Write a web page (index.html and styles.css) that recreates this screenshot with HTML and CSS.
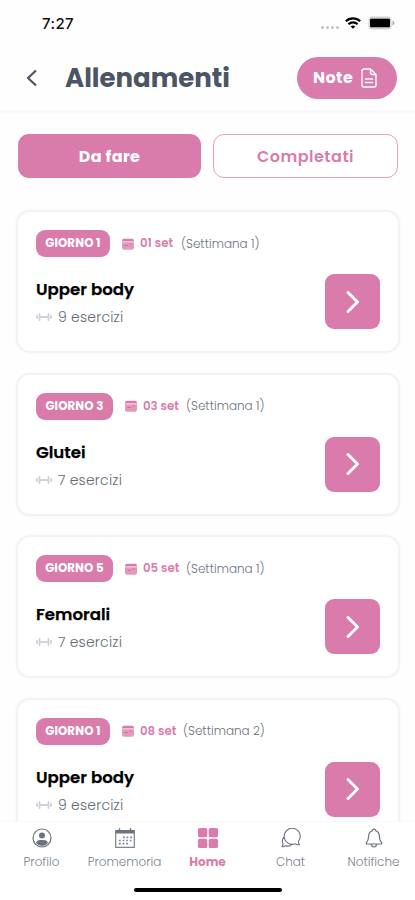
FILE: index.html
```html
<!DOCTYPE html>
<html lang="it">
<head>
<meta charset="utf-8">
<meta name="viewport" content="width=device-width, initial-scale=1">
<title>Allenamenti</title>
<link rel="stylesheet" href="styles.css">
</head>
<body>
<svg class="defs" aria-hidden="true">
  <symbol id="calendar" viewBox="0 0 12 12"><path fill="#e29abb" d="M0 4.300h12v5.500a2 2 0 0 1-2 2H2a2 2 0 0 1-2-2z"/><path fill="#d97bab" d="M2 .8h8a2 2 0 0 1 2 2v.7H0v-.7a2 2 0 0 1 2-2z"/><path stroke="#c56a95" d="M2.500 7.500h3M7.500 6h2"/></symbol>
  <symbol id="dumbbell" viewBox="0 0 16 10"><path d="M1 4v2M3.500 2v6M5 5h6M12.500 2v6M15 4v2" fill="none" stroke="#cdd1dc" stroke-width="1.800" stroke-linecap="round"/></symbol>
  <symbol id="chevron" viewBox="0 0 16 24"><path d="M3 2.500l9.500 9.500L3 21.500" fill="none" stroke="#fff" stroke-width="3" stroke-linecap="round" stroke-linejoin="round"/></symbol>
</svg>
<div class="screen">
  <div class="status">
    <span class="time">7:27</span>
    <span class="dots"><i></i><i></i><i></i><i></i></span>
    <svg class="wifi" viewBox="0 0 16 12" fill="none" stroke="#000" stroke-width="2.100"><path d="M.8 4.300a10.300 10.300 0 0 1 14.400 0M3.400 7.200a6.600 6.600 0 0 1 9.200 0"/><path d="M8 11.800L5.700 9.500a3.300 3.300 0 0 1 4.600 0z" fill="#000" stroke="none"/></svg>
    <svg class="battery" viewBox="0 0 27 14"><rect x=".5" y=".5" width="23" height="13" rx="3.500" fill="#d2d2d2"/><rect x="2" y="2.800" width="20" height="8.400" rx="1.200"/><path d="M24.500 4.500q2 1 2 2.500t-2 2.500z" fill="#aaa"/></svg>
  </div>
  <header class="header">
    <svg class="back" viewBox="0 0 12 18"><path d="M10 1.500L2 9l8 7.500" fill="none" stroke="#4b5563" stroke-width="2.200" stroke-linejoin="round"/></svg>
    <h1>Allenamenti</h1>
    <button class="note"><span>Note</span><svg viewBox="0 0 16 20" fill="none" stroke="#fff" stroke-width="1.400" stroke-linejoin="round" stroke-linecap="round"><path d="M9.500 1H3a2 2 0 0 0-2 2v14a2 2 0 0 0 2 2h10a2 2 0 0 0 2-2V6.500zM9.500 1v3.500a2 2 0 0 0 2 2H15M4.500 11h7M4.500 14.500h7"/></svg></button>
  </header>
  <div class="tabs"><button class="tab active">Da fare</button><button class="tab outline">Completati</button></div>
  <main class="list">
    <article class="card">
      <div class="meta"><span class="day">GIORNO 1</span><svg class="cal"><use href="#calendar"/></svg><b class="date one">01 set</b><span class="week">(Settimana 1)</span></div>
      <div class="row"><div><h2>Upper body</h2><p><svg><use href="#dumbbell"/></svg>9 esercizi</p></div><button class="go"><svg><use href="#chevron"/></svg></button></div>
    </article>
    <article class="card">
      <div class="meta"><span class="day wide">GIORNO 3</span><svg class="cal"><use href="#calendar"/></svg><b class="date">03 set</b><span class="week">(Settimana 1)</span></div>
      <div class="row"><div><h2>Glutei</h2><p><svg><use href="#dumbbell"/></svg>7 esercizi</p></div><button class="go"><svg><use href="#chevron"/></svg></button></div>
    </article>
    <article class="card">
      <div class="meta"><span class="day wide">GIORNO 5</span><svg class="cal"><use href="#calendar"/></svg><b class="date">05 set</b><span class="week">(Settimana 1)</span></div>
      <div class="row"><div><h2>Femorali</h2><p><svg><use href="#dumbbell"/></svg>7 esercizi</p></div><button class="go"><svg><use href="#chevron"/></svg></button></div>
    </article>
    <article class="card">
      <div class="meta"><span class="day">GIORNO 1</span><svg class="cal"><use href="#calendar"/></svg><b class="date">08 set</b><span class="week">(Settimana 2)</span></div>
      <div class="row"><div><h2>Upper body</h2><p><svg><use href="#dumbbell"/></svg>9 esercizi</p></div><button class="go"><svg><use href="#chevron"/></svg></button></div>
    </article>
  </main>
  <footer class="bottom">
    <nav>
      <a><svg viewBox="0 0 20 20"><circle cx="10" cy="10" r="9" fill="none" stroke="#6b7280" stroke-width="1.200"/><circle cx="10" cy="7.500" r="3" fill="#6b7280"/><path d="M4 15q1.200-3 4-3h4q2.800 0 4 3-2.500 3-6 3t-6-3z" fill="#6b7280"/></svg><span>Profilo</span></a>
      <a><svg viewBox="0 0 20 20"><path d="M.7 2.500h18.600v16.800H.7z" fill="none" stroke="#7b828e" stroke-width="1.200"/><path d="M.7 2h18.600v3.500H.7z" fill="#6b7280"/><path d="M4.500.3v2.500M15.500.3v2.500" stroke="#6b7280" stroke-width="1.400"/><path d="M8 9.300h9M4 12.500h13M4 15.700h9" stroke="#7b828e" stroke-width="1.700" stroke-dasharray="1.700 1.900"/></svg><span>Promemoria</span></a>
      <a class="current"><svg viewBox="0 0 20 20" fill="#d97bab"><rect width="9.300" height="9.300" rx="1.600"/><rect x="10.700" width="9.300" height="9.300" rx="1.600"/><rect y="10.700" width="9.300" height="9.300" rx="1.600"/><rect x="10.700" y="10.700" width="9.300" height="9.300" rx="1.600"/></svg><span>Home</span></a>
      <a><svg viewBox="0 0 20 20" fill="none" stroke="#6b7280" stroke-width="1.100" stroke-linejoin="round"><path d="M17.300 13.500a8 8 0 1 0-3.300 2.300q2.200 1.500 4.500.8-1-1-1.200-3.100zM3.300 8.500Q.2 12 2 15.500q0 2-1 3.200 2 0 3.500-1 3.500 1.300 6.200-1"/></svg><span>Chat</span></a>
      <a><svg viewBox="0 0 20 20" fill="none" stroke="#6b7280" stroke-width="1.200" stroke-linejoin="round"><path d="M8.500 2.600a1.500 1.500 0 0 1 3 0C14.500 3.500 15.500 6 15.500 9c0 3 .8 4.300 2 5.500.5.600.2 1.500-.6 1.500H3.100c-.8 0-1.100-.9-.6-1.500 1.200-1.200 2-2.500 2-5.500 0-3 1-5.500 4-6.400zM7.500 16q0 3 2.500 3t2.500-3"/></svg><span>Notifiche</span></a>
    </nav>
    <div class="indicator"></div>
  </footer>
</div>
</body>
</html>
```
FILE: styles.css
```css
* { box-sizing: border-box; }
body, h1, h2, p { margin: 0; }
body { font-family: Poppins, Inter, sans-serif; background: #fff; }
button { font: inherit; border: 0; padding: 0; }
svg { display: block; flex: none; }
.defs { display: none; }
.screen { height: 900px; display: flex; flex-direction: column; overflow: hidden; background: #fefefe; }
.status { height: 46px; flex: none; display: flex; align-items: center; padding: 0 20px 0 42px; }
.time { font-family: Inter, sans-serif; font-size: 15px; font-weight: 500; letter-spacing: .4px; color: #111; margin-right: auto; }
.dots { display: flex; gap: 2px; padding-top: 8px; margin-right: 6px; }
.dots i { width: 3px; height: 3px; border-radius: 50%; background: #c2c2c2; }
.wifi { width: 16px; height: 12px; margin-right: 7px; }
.battery { width: 27px; height: 14px; }
.header { height: 64px; flex: none; display: flex; align-items: center; padding: 0 18px 0 26px; }
.back { width: 12px; height: 18px; margin-right: 27px; }
h1 { font-size: 26px; line-height: 36px; font-weight: 700; letter-spacing: 0; color: #4b5563; margin-right: auto; }
.note { width: 100px; height: 42px; border-radius: 21px; background: #d97bab; color: #fff; display: flex; align-items: center; padding-left: 16px; gap: 7px; font-size: 16px; line-height: 20px; font-weight: 700; letter-spacing: .4px; }
.note span { width: 41px; text-align: left; }
.note svg { width: 16px; height: 20px; }
.tabs { border-top: 3px solid #f9f9f9; flex: none; display: flex; gap: 12px; padding: 21px 17px 0 18px; }
.tab { flex: 1; height: 44px; border-radius: 11px; font-size: 16px; font-weight: 700; letter-spacing: .35px; }
.active { background: #d97bab; color: #fff; }
.outline { background: #fff; color: #d97bab; border: 1.500px solid #e3a0c0; font-weight: 600; letter-spacing: .5px; }
.list { flex: 1; min-height: 0; overflow: hidden; padding: 32px 15px 0 16px; display: flex; flex-direction: column; gap: 19.600px; }
.card { height: 143px; flex: none; border: 2px solid #f3f3f3; border-radius: 14px; box-shadow: 0 0 3px #f4f4f4; background: #fff; padding: 18px 18px 0; }
.meta { height: 27px; display: flex; align-items: center; font-size: 12px; }
.day { width: 74px; height: 27px; border-radius: 9px; background: #d97bab; color: #fff; font-size: 11.800px; font-weight: 700; letter-spacing: .1px; line-height: 27px; text-align: center; margin-right: 12px; white-space: nowrap; }
.wide { width: 77px; }
.cal { width: 12px; height: 12px; margin-right: 6px; }
.date { font-size: 11.800px; font-weight: 600; color: #d97bab; width: 36px; margin-right: 7px; white-space: nowrap; }
.one { width: 33px; margin-right: 8px; }
.week { color: #6b7280; font-weight: 300; letter-spacing: 0; white-space: nowrap; }
.row { display: flex; justify-content: space-between; padding-top: 17px; }
h2 { font-size: 16.600px; line-height: 26px; font-weight: 600; color: #000; margin-top: 3px; -webkit-text-stroke: .25px #000; }
.row p { font-size: 14px; line-height: 22px; margin-top: 3px; color: #626976; letter-spacing: .2px; font-weight: 300; display: flex; align-items: center; gap: 6px; }
.row p svg { width: 16px; height: 10px; }
.go { width: 55px; height: 55px; border-radius: 9px; background: #d97bab; display: grid; place-items: center; }
.go svg { width: 16px; height: 24px; }
.bottom { height: 79px; flex: none; border-top: 1px solid #f9f9f9; background: #fff; padding-top: 6px; }
nav { display: grid; grid-template-columns: repeat(5, 83px); height: 60px; }
nav a { display: flex; flex-direction: column; align-items: center; font-size: 12px; line-height: 16px; color: #7b828e; gap: 6px; font-weight: 300; }
nav svg { width: 20px; height: 20px; }
nav .current { color: #d97bab; font-weight: 700; }
.indicator { width: 148px; height: 4px; border-radius: 2px; background: #000; margin: 0 auto; }
```
